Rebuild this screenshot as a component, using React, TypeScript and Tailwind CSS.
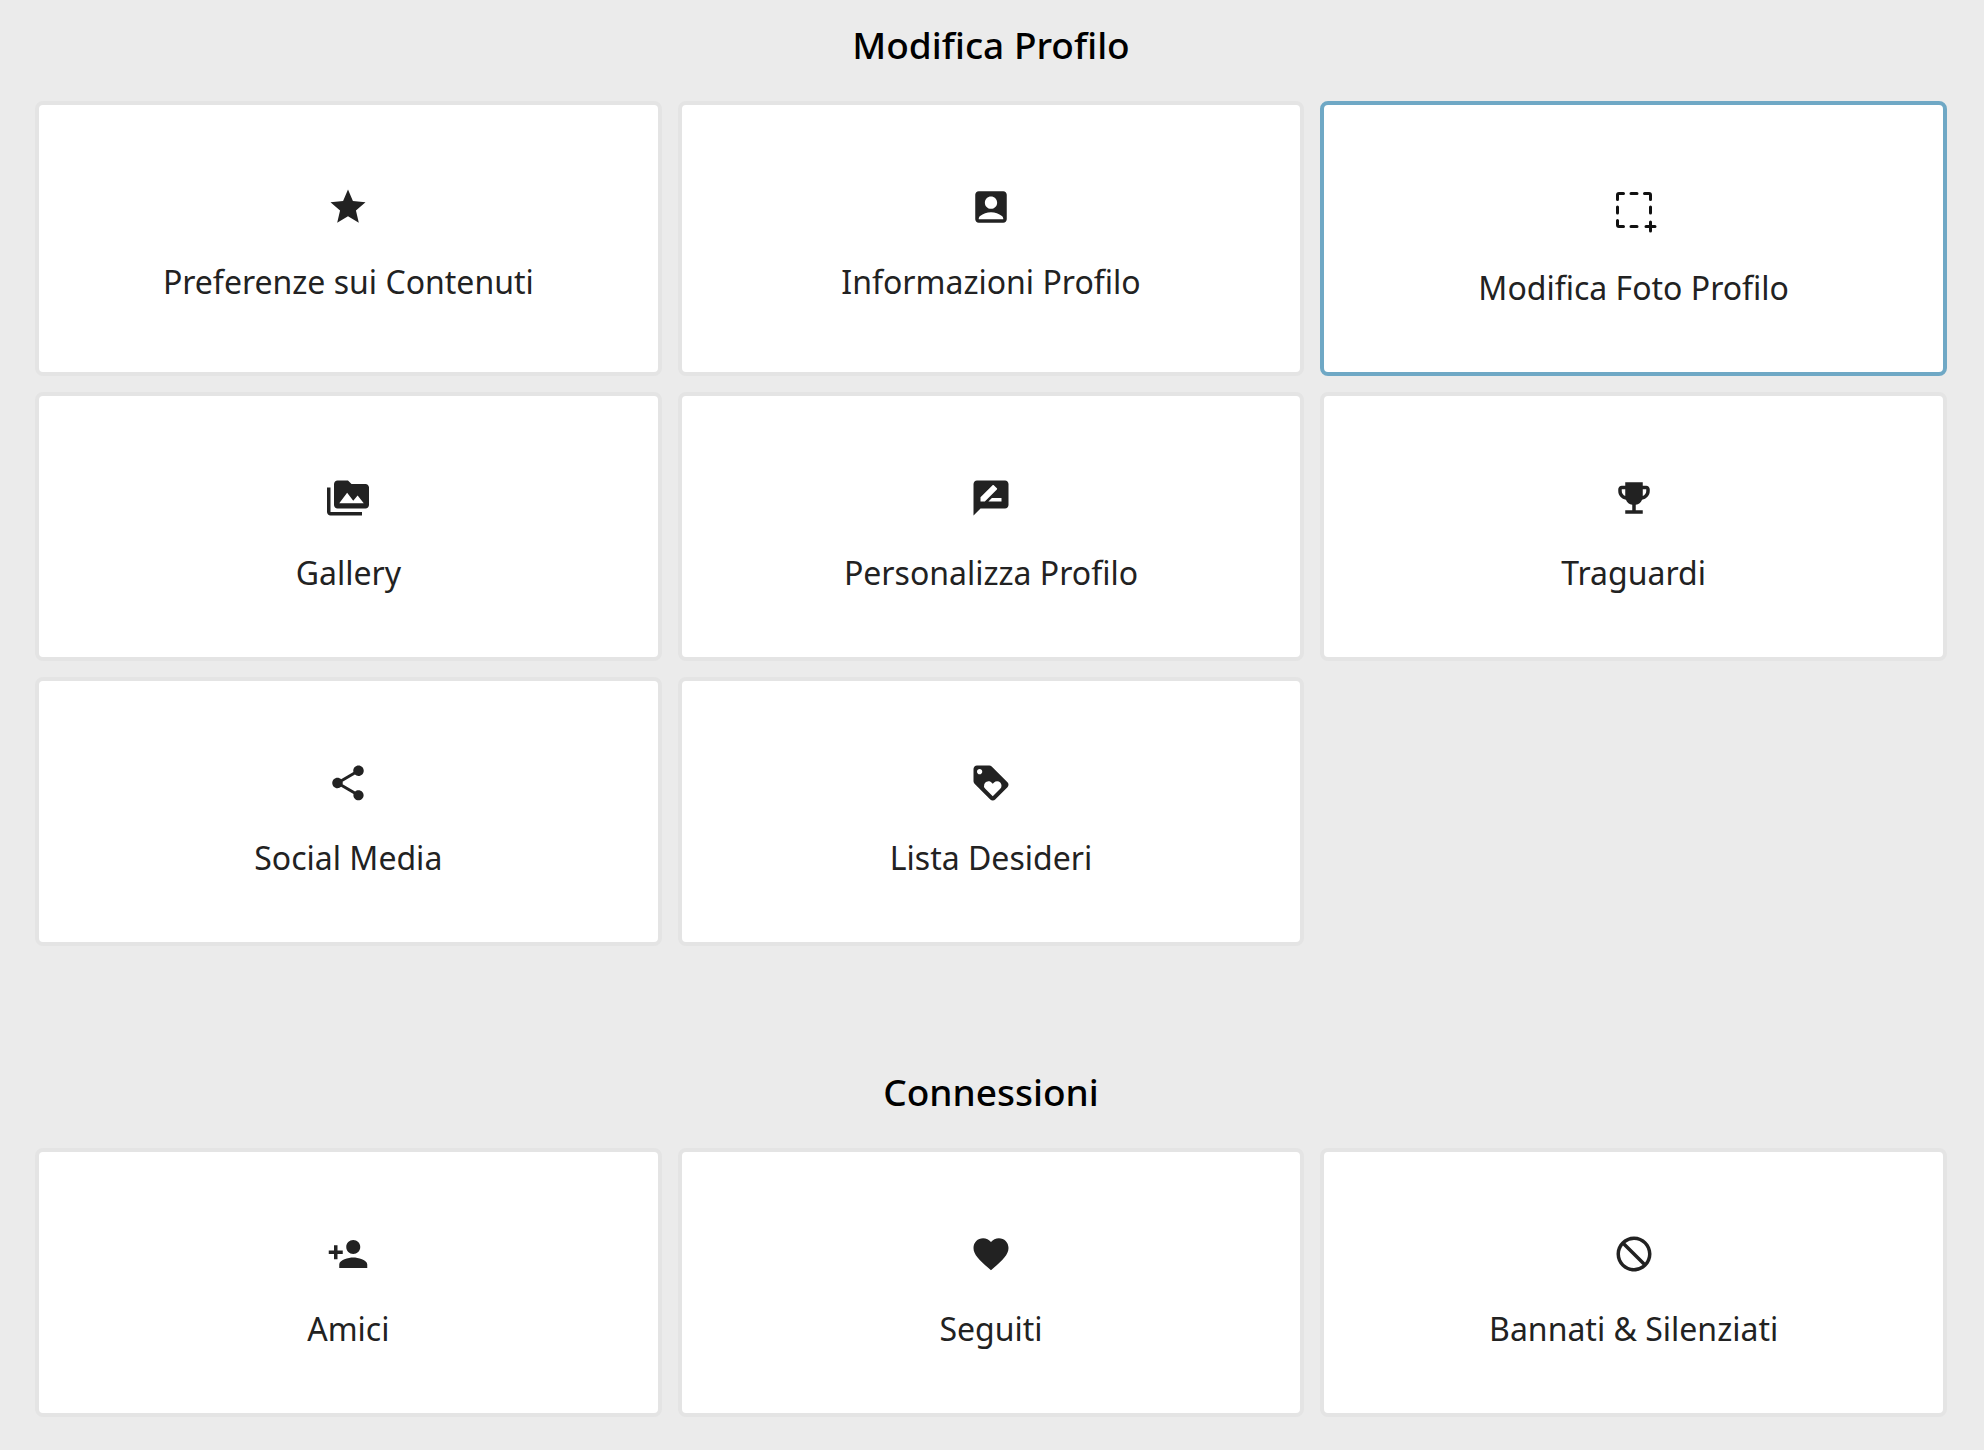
import type { IconType } from "react-icons";
import {
  MdAccountBox,
  MdEmojiEvents,
  MdFavorite,
  MdLoyalty,
  MdNotInterested,
  MdPermMedia,
  MdPersonAdd,
  MdRateReview,
  MdShare,
  MdStar,
} from "react-icons/md";
import { PiSelectionPlus } from "react-icons/pi";

type Tile = { label: string; icon: IconType; active?: boolean };

const profileTiles: Tile[] = [
  { label: "Preferenze sui Contenuti", icon: MdStar },
  { label: "Informazioni Profilo", icon: MdAccountBox },
  { label: "Modifica Foto Profilo", icon: PiSelectionPlus, active: true },
  { label: "Gallery", icon: MdPermMedia },
  { label: "Personalizza Profilo", icon: MdRateReview },
  { label: "Traguardi", icon: MdEmojiEvents },
  { label: "Social Media", icon: MdShare },
  { label: "Lista Desideri", icon: MdLoyalty },
];

const connectionTiles: Tile[] = [
  { label: "Amici", icon: MdPersonAdd },
  { label: "Seguiti", icon: MdFavorite },
  { label: "Bannati & Silenziati", icon: MdNotInterested },
];

function TileLink({ label, icon: Icon, active }: Tile) {
  return (
    <a
      href="#"
      className={`flex flex-col items-center gap-8 rounded-lg border-4 bg-white px-4 pt-[81px] pb-[62px] ${
        active ? "border-[#6fa8c5]" : "border-[#e4e4e4]"
      }`}
    >
      <Icon
        aria-hidden="true"
        className={active ? "size-12 text-[#111111]" : "size-[42px] text-[#222222]"}
      />
      <span className="text-center text-[32px] leading-[44px] text-[#222222]">{label}</span>
    </a>
  );
}

function Section({ title, tiles }: { title: string; tiles: Tile[] }) {
  return (
    <section>
      <h2 className="mb-8 text-center text-[37px] leading-[48px] font-medium text-black">{title}</h2>
      <div className="grid grid-cols-3 gap-4">
        {tiles.map((tile) => (
          <TileLink key={tile.label} {...tile} />
        ))}
      </div>
    </section>
  );
}

export default function App() {
  return (
    <main className="flex min-h-screen flex-col gap-[122px] bg-[#ebebeb] pt-[21px] pr-[37px] pb-8 pl-[35px] font-['Noto_Sans',sans-serif]">
      <Section title="Modifica Profilo" tiles={profileTiles} />
      <Section title="Connessioni" tiles={connectionTiles} />
    </main>
  );
}
